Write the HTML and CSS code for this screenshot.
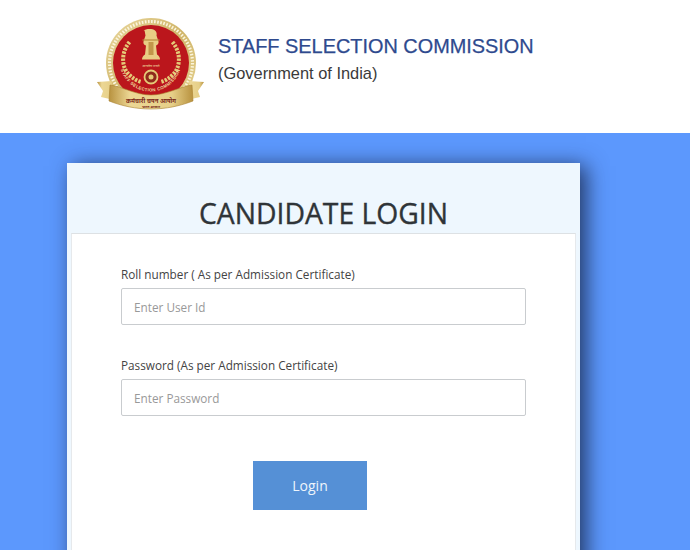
FILE: index.html
```html
<!DOCTYPE html>
<html lang="en">
<head>
<meta charset="utf-8">
<title>Candidate Login</title>
<link rel="stylesheet" href="styles.css">
</head>
<body>
<header class="masthead">
  <svg class="emblem" width="110" height="95" viewBox="0 0 110 95" aria-hidden="true">
    <defs>
      <linearGradient id="gold" x1="0" y1="0" x2="1" y2="1">
        <stop offset="0" stop-color="#ead9a0"/>
        <stop offset=".5" stop-color="#d0b569"/>
        <stop offset="1" stop-color="#e8d596"/>
      </linearGradient>
      <linearGradient id="rib" x1="0" y1="0" x2="1" y2="0">
        <stop offset="0" stop-color="#b8923f"/>
        <stop offset=".25" stop-color="#ecd795"/>
        <stop offset=".75" stop-color="#e6cf88"/>
        <stop offset="1" stop-color="#b8923f"/>
      </linearGradient>
      <path id="ringtext" d="M23 48a31 31 0 0 0 61 0"/>
    </defs>
    <circle cx="54" cy="45" r="45" fill="url(#gold)"/>
    <circle cx="54" cy="45" r="41.500" fill="none" stroke="#fbf5dd" stroke-width="3.200" stroke-dasharray="1.600 1.500"/>
    <circle cx="54" cy="45" r="38" fill="#bb161c"/>
    <path d="M46.500 13c2-2.500 9-2.500 11.500-.5 1.500 1 2 3 1.500 5l2 6c.5 2-1 3.500-2.500 4l1 9c2 1 3 3 3 5h-18c0-2 1-4 3-5l1-9c-2-.5-3-2-2.500-4l2-6c-.5-2-.5-3.500-1-5z" fill="#e9cd84"/>
    <path d="M51.500 24h5v13h-5z" fill="#c2964a"/>
    <path d="M45.500 22h17" stroke="#b98c3d" stroke-width="1.200"/>
    <text class="motto" x="54" y="49" text-anchor="middle">सत्यमेव जयते</text>
    <path d="M32.500 24c-9 11-8 26 0 33 4 4 8 6 12 7" fill="none" stroke="#e5cb78" stroke-width="4" stroke-dasharray="2.400 1.200"/>
    <path d="M75.500 24c9 11 8 26 0 33-4 4-8 6-12 7" fill="none" stroke="#e5cb78" stroke-width="4" stroke-dasharray="2.400 1.200"/>
    <circle cx="54" cy="59" r="6.500" fill="#8f2a1c" stroke="#e5cb78" stroke-width="1.800"/>
    <circle cx="54" cy="59" r="2.500" fill="#e5cb78"/>
    <text class="ring-text"><textPath href="#ringtext" startOffset="50%" text-anchor="middle">STAFF SELECTION COMMISSION</textPath></text>
    <path d="M0 64l15-1 4 12-4 2 2 5-13-3 2-6z" fill="url(#rib)"/>
    <path d="M107 64l-15-1-4 12 4 2-2 5 13-3-2-6z" fill="url(#rib)"/>
    <path d="M13 67c13 2 26 10 41 10s28-8 41-10l1 16c-13 5-27 8-42 8s-29-3-42-8z" fill="url(#rib)" stroke="#a9822f" stroke-width=".6"/>
    <text class="emblem-text" x="54" y="85" text-anchor="middle">कर्मचारी चयन आयोग</text>
    <text class="emblem-small" x="54" y="89.500" text-anchor="middle">भारत सरकार</text>
  </svg>
  <div class="org">
    <div class="org-name">STAFF SELECTION COMMISSION</div>
    <div class="org-sub">(Government of India)</div>
  </div>
</header>
<main class="stage">
  <section class="card">
    <h1 class="card-title">CANDIDATE LOGIN</h1>
    <form class="form">
      <div class="field">
        <label class="field-label" for="uid">Roll number ( As per Admission Certificate)</label>
        <input class="field-input" id="uid" type="text" placeholder="Enter User Id">
      </div>
      <div class="field">
        <label class="field-label" for="pwd">Password (As per Admission Certificate)</label>
        <input class="field-input" id="pwd" type="password" placeholder="Enter Password">
      </div>
      <div class="actions"><button class="login" type="button">Login</button></div>
    </form>
  </section>
</main>
</body>
</html>
```
FILE: styles.css
```css
* { box-sizing: border-box; }
html, body { margin: 0; height: 550px; overflow: hidden; }
body { background: #5c98fd; font-family: "Open Sans", sans-serif; }

.masthead {
  height: 133px;
  background: #fff;
  display: flex;
  align-items: flex-start;
  padding: 18px 0 0 97px;
}
.emblem { flex: none; margin-right: 11px; }
.emblem-text { font-family: "Noto Sans", "DejaVu Sans", sans-serif; font-size: 6px; font-weight: 700; fill: #7a2a1a; }
.emblem-small { font-family: "Noto Sans", "DejaVu Sans", sans-serif; font-size: 3.500px; font-weight: 700; fill: #7a2a1a; }
.motto { font-family: "Noto Sans", "DejaVu Sans", sans-serif; font-size: 3.500px; fill: #f3e3ad; }
.ring-text { font-family: "Liberation Sans", sans-serif; font-size: 4.400px; font-weight: 700; fill: #f0dc9c; letter-spacing: .3px; }
.org { padding-top: 15px; font-family: "Liberation Sans", Arial, sans-serif; }
.org-name { font-size: 19.900px; line-height: 26px; color: #2e4a8e; white-space: nowrap; -webkit-text-stroke: .25px #2e4a8e; }
.org-sub { font-size: 16.400px; line-height: 20px; margin-top: 4px; color: #3a3a3a; }

.stage { height: 417px; padding: 30px 0 0 67px; overflow: hidden; }
.card {
  width: 513px;
  height: 420px;
  background: #eef7fe;
  padding: 0 4px;
  box-shadow: 6px 3px 20px rgba(20, 30, 60, .8);
}
.card-title {
  margin: 0;
  height: 70px;
  padding-top: 32px;
  text-align: center;
  font-size: 28.300px;
  line-height: 36px;
  font-weight: 500;
  color: #2f3438;
  -webkit-text-stroke: .35px #2f3438;
}
.form {
  height: 350px;
  background: #fff;
  border-top: 1px solid #dde1e4;
  border-left: 1px solid #e6e9ec;
  border-right: 1px solid #e6e9ec;
  padding: 32px 49px 0;
}
.field { margin-bottom: 32px; }
.field-label { display: block; font-size: 11.750px; line-height: 17px; margin-bottom: 5px; color: #444; }
.field-input {
  display: block;
  width: 100%;
  height: 37px;
  padding: 0 12px;
  background: #fff;
  border: 1px solid #c9cccf;
  border-radius: 2px;
  font: 11.750px "Open Sans", sans-serif;
  color: #444;
}
.field-input::placeholder { color: #999; opacity: 1; }
.actions { display: flex; padding: 13px 0 0 132px; }
.login {
  width: 114px;
  height: 49px;
  border: 0;
  background: #5590d6;
  color: #eef5fc;
  font: 14px "Open Sans", sans-serif;
}
```
